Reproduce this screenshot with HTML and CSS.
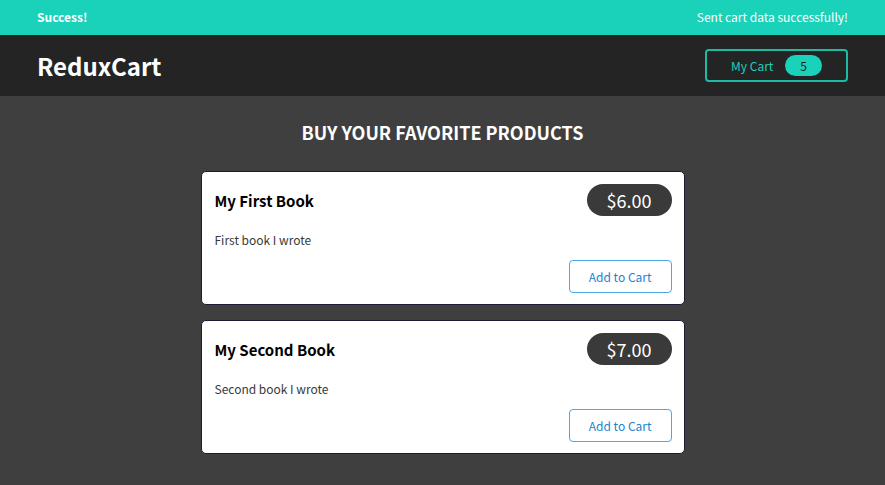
FILE: index.html
```html
<!DOCTYPE html>
<html lang="en">
<head>
<meta charset="utf-8">
<meta name="viewport" content="width=device-width, initial-scale=1">
<title>ReduxCart</title>
<link rel="stylesheet" href="styles.css">
</head>
<body>
<section class="notification" role="status">
  <h2>Success!</h2>
  <p>Sent cart data successfully!</p>
</section>
<header class="header">
  <h1>ReduxCart</h1>
  <button class="cart-button" type="button"><span>My Cart</span><span class="badge">5</span></button>
</header>
<main class="products">
  <h2>Buy your favorite products</h2>
  <ul>
    <li class="card">
      <div class="card-head"><h3>My First Book</h3><div class="price">$6.00</div></div>
      <p>First book I wrote</p>
      <div class="actions"><button type="button">Add to Cart</button></div>
    </li>
    <li class="card">
      <div class="card-head"><h3>My Second Book</h3><div class="price">$7.00</div></div>
      <p>Second book I wrote</p>
      <div class="actions"><button type="button">Add to Cart</button></div>
    </li>
  </ul>
</main>
</body>
</html>
```
FILE: styles.css
```css
* { box-sizing: border-box; }

body {
  margin: 0;
  background: #3f3f3f;
  color: #3a3a3a;
  font-family: "Noto Sans CJK JP", "Noto Sans", sans-serif;
  font-size: 12px;
  line-height: 19px;
}

h1, h2, h3, p, ul { margin: 0; padding: 0; }
button { font: inherit; cursor: pointer; background: transparent; }

.notification {
  display: flex;
  justify-content: space-between;
  align-items: center;
  padding: 7px 37px 9px;
  background: #1ad1b9;
  color: white;
}
.notification h2 { font-size: 12px; }

.header {
  display: flex;
  justify-content: space-between;
  align-items: center;
  padding: 14px 37px;
  background: #242424;
  color: white;
}
.header h1 { font-size: 24px; line-height: 33px; }

.cart-button {
  display: flex;
  align-items: center;
  gap: 12px;
  padding: 4px 24px;
  border: 2px solid #1dbba6;
  border-radius: 4px;
  color: #1ad1b9;
}
.badge {
  padding: 1px 15px;
  border-radius: 30px;
  background: #1ad1b9;
  color: #1d1d1d;
}

.products {
  width: 90%;
  max-width: 484px;
  margin: 21px auto 0;
}
.products h2 {
  color: white;
  font-size: 18px;
  line-height: 30px;
  text-align: center;
  text-transform: uppercase;
}
.products ul { margin-top: 24px; list-style: none; }

.card {
  margin-bottom: 15px;
  padding: 12px 12px 11px 13px;
  border: 1px solid #1c1c34;
  border-radius: 5px;
  background: white;
}
.card-head {
  display: flex;
  justify-content: space-between;
  align-items: center;
}
.card h3 { padding-top: 2px; font-size: 15px; line-height: 24px; color: black; }
.price {
  padding: 2px 20px;
  border-radius: 30px;
  background: #3a3a3a;
  color: white;
  font-size: 18px;
  line-height: 28px;
}
.card p { margin-top: 14px; }
.actions { display: flex; justify-content: flex-end; margin-top: 11px; }
.actions button {
  padding: 6px 19px;
  border: 1px solid #4aa8e2;
  border-radius: 4px;
  color: #2383cf;
}
```
